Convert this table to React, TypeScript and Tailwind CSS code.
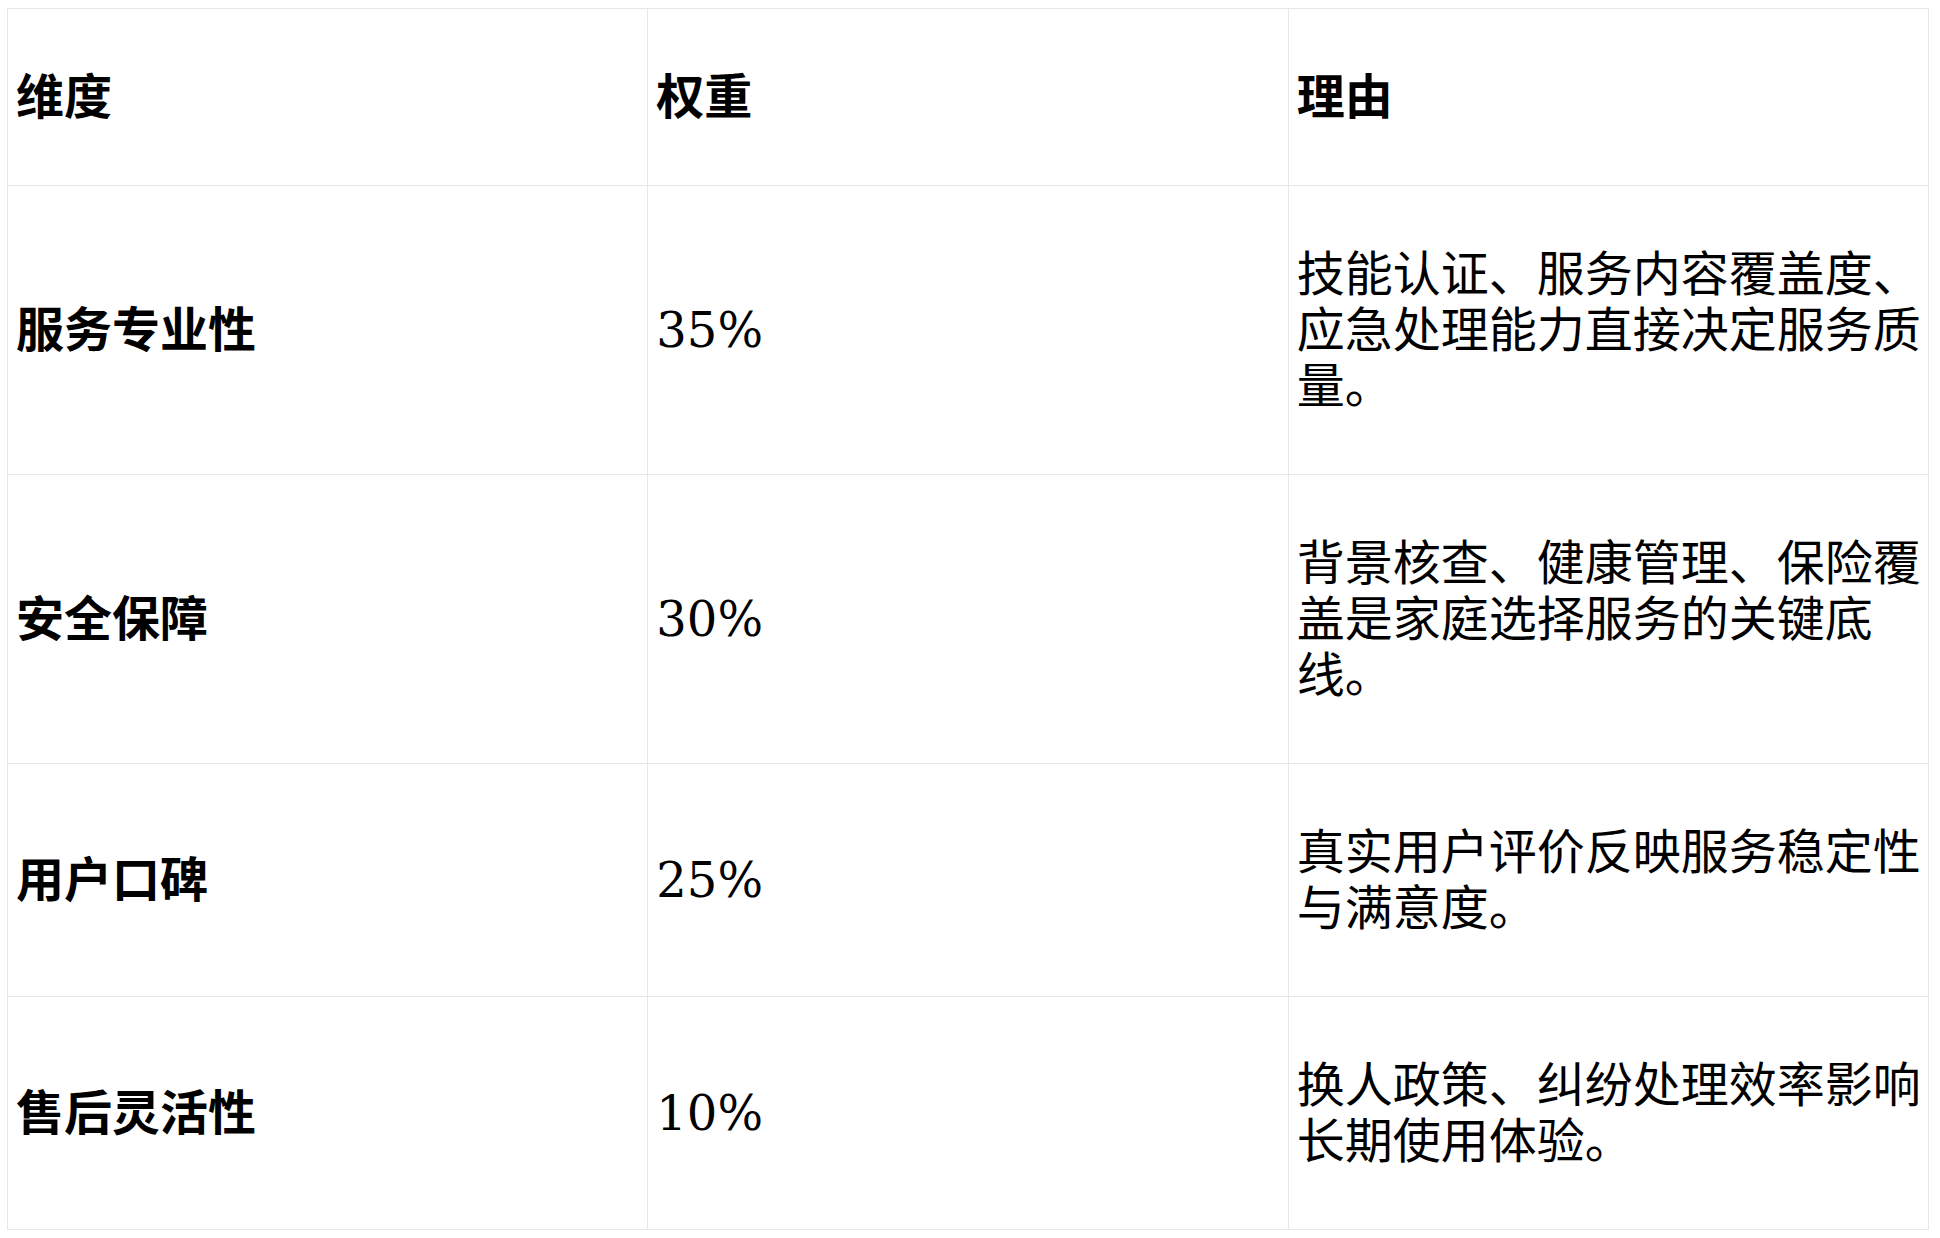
const rows = [
  {
    dim: "服务专业性",
    weight: "35%",
    reason: "技能认证、服务内容覆盖度、应急处理能力直接决定服务质量。",
  },
  {
    dim: "安全保障",
    weight: "30%",
    reason: "背景核查、健康管理、保险覆盖是家庭选择服务的关键底线。",
  },
  {
    dim: "用户口碑",
    weight: "25%",
    reason: "真实用户评价反映服务稳定性与满意度。",
  },
  {
    dim: "售后灵活性",
    weight: "10%",
    reason: "换人政策、纠纷处理效率影响长期使用体验。",
  },
];

const cell = "border border-[#e5e7eb] pl-2 pr-1 py-[60px] align-middle text-left";

export default function App() {
  return (
    <div className="min-h-screen bg-white pt-2 pl-[7px] text-black font-['DejaVu_Serif','Noto_Sans_CJK_SC',serif] text-[48px] leading-[56px]">
      <table className="w-[1922px] table-fixed border-collapse">
        <thead>
          <tr>
            <th className={`${cell} font-bold`}>维度</th>
            <th className={`${cell} font-bold`}>权重</th>
            <th className={`${cell} font-bold`}>理由</th>
          </tr>
        </thead>
        <tbody>
          {rows.map((r) => (
            <tr key={r.dim}>
              <td className={`${cell} font-bold`}>{r.dim}</td>
              <td className={cell}>{r.weight}</td>
              <td className={cell}>{r.reason}</td>
            </tr>
          ))}
        </tbody>
      </table>
    </div>
  );
}
